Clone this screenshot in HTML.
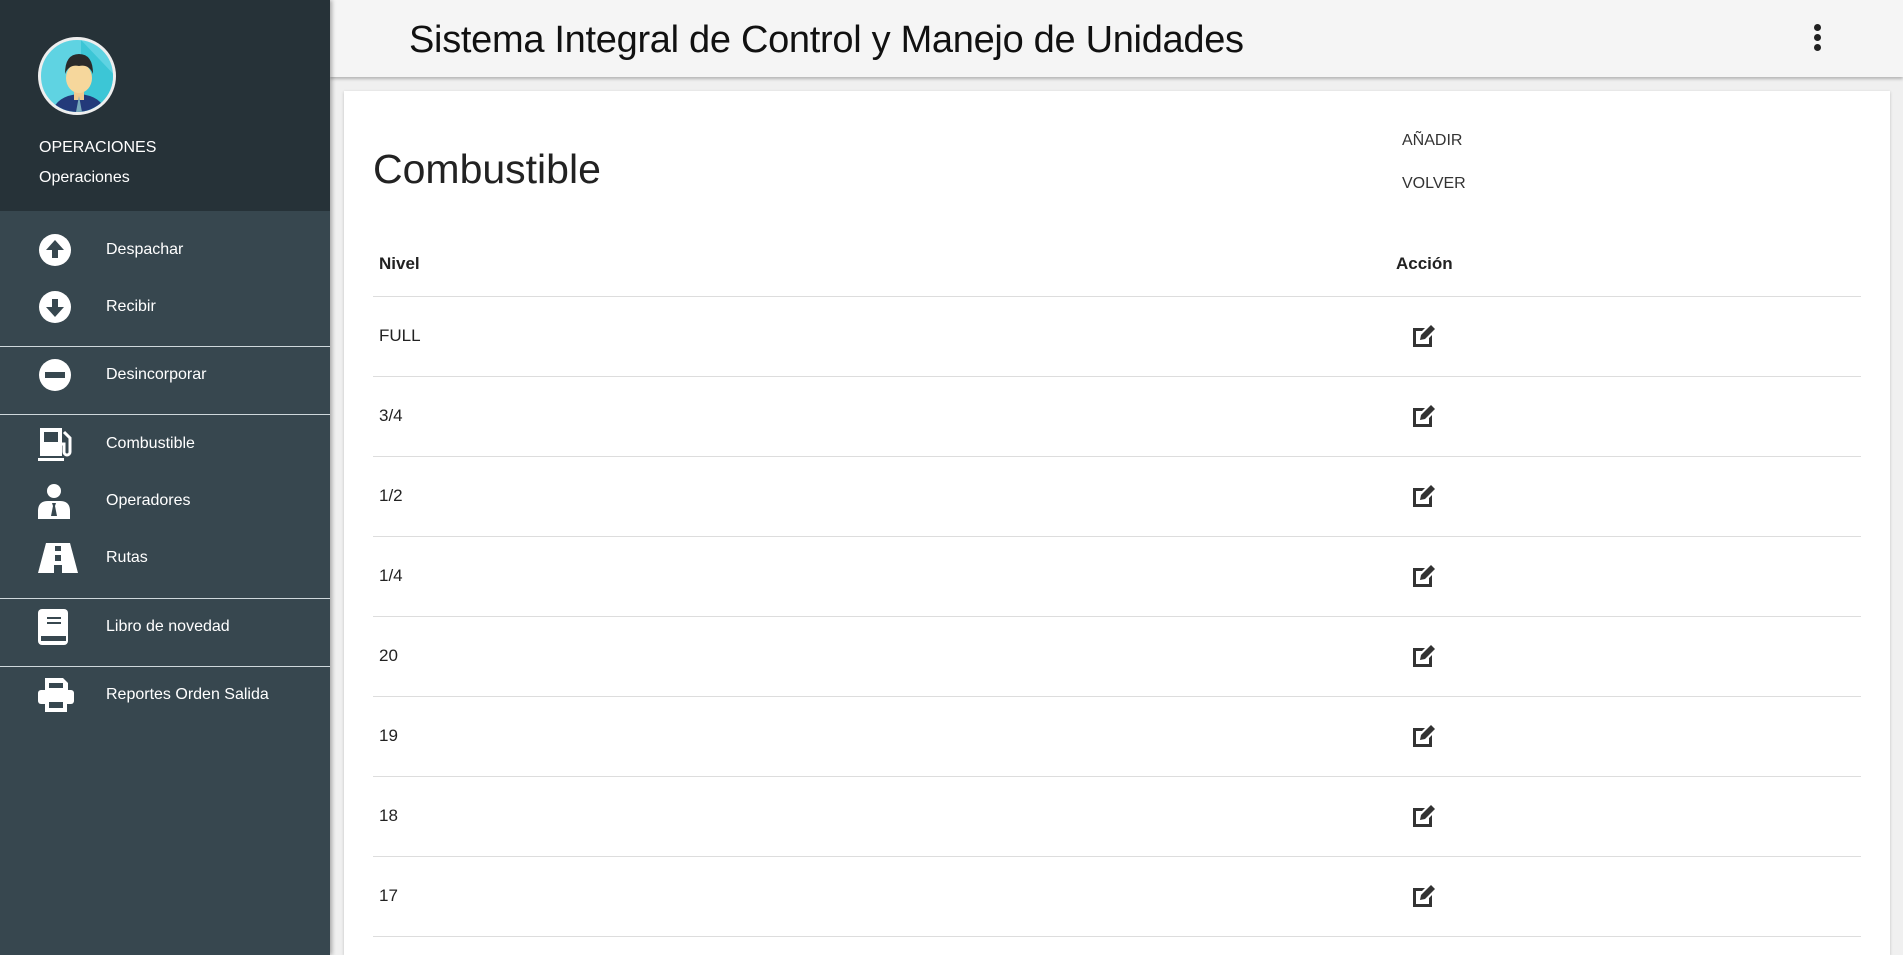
<!DOCTYPE html>
<html><head><meta charset="utf-8"><style>
*{margin:0;padding:0;box-sizing:border-box}
html{width:1903px;height:955px;overflow:hidden}
body{width:1903px;height:955px;overflow:hidden;background:#f0f0f0;font-family:"Liberation Sans",sans-serif;position:relative}
.side{position:absolute;left:0;top:0;width:330px;height:955px;background:#37474f;box-shadow:2px 0 4px rgba(0,0,0,.3);z-index:2}
.sidetop{height:211px;background:#263238;position:relative}
.av{position:absolute;left:38px;top:37px;width:78px;height:78px;border-radius:50%;background:#5fd3e2;border:3px solid #eee;overflow:hidden}
.st{position:absolute;left:39px;color:#fff;font-size:16px}
.mi{position:absolute;left:106px;color:#fff;font-size:16px;transform:translateY(-50%)}
.ic{position:absolute;left:38px;transform:translateY(-50%)}
.hr{position:absolute;left:0;width:330px;height:1px;background:#cfd8dc}
.top{position:absolute;left:330px;top:0;right:0;height:77px;background:#f5f5f5;box-shadow:0 2px 3px rgba(0,0,0,.25)}
.title{position:absolute;left:79px;top:19px;font-size:38px;color:#111;letter-spacing:-0.3px}
.kb{position:absolute;left:1484px;top:24px}
.kb i{display:block;width:7px;height:7px;border-radius:50%;background:#222;margin-bottom:3px}
.card{position:absolute;left:344px;top:91px;width:1546px;height:864px;background:#fff;box-shadow:0 1px 3px rgba(0,0,0,.2);overflow:hidden}
.h1{position:absolute;left:29px;top:55px;font-size:41px;color:#222}
.btn{position:absolute;left:1058px;font-size:16px;color:#333}
.th{position:absolute;top:163px;font-size:17px;font-weight:bold;color:#222}
.row{position:absolute;left:29px;width:1488px;height:80px;border-top:1px solid #ddd}
.row span{position:absolute;left:6px;top:29px;font-size:17px;color:#222}
.row svg{position:absolute;left:1038px;top:26px}
</style></head><body>
<div class="side">
<div class="sidetop">
<div class="av"><svg width="78" height="78" viewBox="0 0 78 78"><path d="M40 0L78 40V78H40Z" fill="#3cc6d6"/><path d="M10 78Q12 56 38 54Q64 56 66 78Z" fill="#233a7a"/><path d="M33 52h10v8h-10z" fill="#f2c98e"/><path d="M38 56l-3 16h6z" fill="#7ab"/><ellipse cx="38" cy="38" rx="13" ry="15" fill="#f6d79c"/><path d="M24 34Q24 14 38 14Q52 14 52 34Q48 24 38 26Q28 24 24 34Z" fill="#2a2a2a"/></svg></div>
<div class="st" style="top:139px">OPERACIONES</div>
<div class="st" style="top:169px">Operaciones</div>
</div>
<svg class="ic" style="top:250px" width="34" height="34" viewBox="0 0 34 34"><circle cx="17" cy="17" r="16" fill="#fff"/><path d="M17 7L8 17h6v8h6v-8h6z" fill="#37474f"/></svg>
<div class="mi" style="top:250px">Despachar</div>
<svg class="ic" style="top:307px" width="34" height="34" viewBox="0 0 34 34"><circle cx="17" cy="17" r="16" fill="#fff"/><path d="M17 27L8 17h6V9h6v8h6z" fill="#37474f"/></svg>
<div class="mi" style="top:307px">Recibir</div>
<div class="hr" style="top:346px"></div>
<svg class="ic" style="top:375px" width="34" height="34" viewBox="0 0 34 34"><circle cx="17" cy="17" r="16" fill="#fff"/><rect x="7" y="14" width="20" height="6" fill="#37474f"/></svg>
<div class="mi" style="top:375px">Desincorporar</div>
<div class="hr" style="top:414px"></div>
<svg class="ic" style="top:444px" width="36" height="36" viewBox="0 0 36 36"><path d="M2 2h22v28H2zM6 6v10h14V6z" fill="#fff"/><rect x="0" y="32" width="26" height="3" fill="#fff"/><path d="M26 6l6 6v14a3 3 0 0 1-6 0v-8h-2" stroke="#fff" stroke-width="3" fill="none"/></svg>
<div class="mi" style="top:444px">Combustible</div>
<svg class="ic" style="top:501px" width="32" height="36" viewBox="0 0 32 36"><circle cx="16" cy="8" r="7" fill="#fff"/><path d="M0 36v-8q0-10 10-10h12q10 0 10 10v8z" fill="#fff"/><path d="M14 20h4l-1 3 2 10h-6l2-10z" fill="#37474f"/></svg>
<div class="mi" style="top:501px">Operadores</div>
<svg class="ic" style="top:558px" width="40" height="30" viewBox="0 0 40 30"><path d="M8 0h24l8 30H0z" fill="#fff"/><rect x="17" y="3" width="6" height="5" fill="#37474f"/><rect x="17" y="12" width="6" height="6" fill="#37474f"/><rect x="16" y="22" width="8" height="8" fill="#37474f"/></svg>
<div class="mi" style="top:558px">Rutas</div>
<div class="hr" style="top:598px"></div>
<svg class="ic" style="top:627px" width="32" height="36" viewBox="0 0 32 36"><rect x="0" y="0" width="30" height="36" rx="4" fill="#fff"/><rect x="9" y="8" width="14" height="2" fill="#37474f"/><rect x="9" y="13" width="14" height="2" fill="#37474f"/><rect x="3" y="27" width="25" height="5" fill="#37474f"/></svg>
<div class="mi" style="top:627px">Libro de novedad</div>
<div class="hr" style="top:666px"></div>
<svg class="ic" style="top:695px" width="36" height="36" viewBox="0 0 36 36"><path d="M7 1h18l5 5v8H7z" fill="#fff"/><rect x="0" y="13" width="36" height="14" rx="3" fill="#fff"/><path d="M7 22h22v13H7z" fill="#fff"/><rect x="11" y="6" width="14" height="5" fill="#37474f"/><rect x="11" y="25" width="14" height="6" fill="#37474f"/></svg>
<div class="mi" style="top:695px">Reportes Orden Salida</div>
</div>
<div class="top"><div class="title">Sistema Integral de Control y Manejo de Unidades</div><div class="kb"><i></i><i></i><i></i></div></div>
<div class="card">
<div class="h1">Combustible</div>
<div class="btn" style="top:41px">AÑADIR</div>
<div class="btn" style="top:84px">VOLVER</div>
<div class="th" style="left:35px">Nivel</div>
<div class="th" style="left:1052px">Acción</div>
<div class="row" style="top:205px"><span>FULL</span><svg width="26" height="26" viewBox="0 0 26 26"><path d="M2 5h12l-3 3H5v13h13v-6l3-3v12H2z" fill="#333"/><path d="M9 17l1-5L20 2l4 4-10 10z" fill="#333"/></svg></div>
<div class="row" style="top:285px"><span>3/4</span><svg width="26" height="26" viewBox="0 0 26 26"><path d="M2 5h12l-3 3H5v13h13v-6l3-3v12H2z" fill="#333"/><path d="M9 17l1-5L20 2l4 4-10 10z" fill="#333"/></svg></div>
<div class="row" style="top:365px"><span>1/2</span><svg width="26" height="26" viewBox="0 0 26 26"><path d="M2 5h12l-3 3H5v13h13v-6l3-3v12H2z" fill="#333"/><path d="M9 17l1-5L20 2l4 4-10 10z" fill="#333"/></svg></div>
<div class="row" style="top:445px"><span>1/4</span><svg width="26" height="26" viewBox="0 0 26 26"><path d="M2 5h12l-3 3H5v13h13v-6l3-3v12H2z" fill="#333"/><path d="M9 17l1-5L20 2l4 4-10 10z" fill="#333"/></svg></div>
<div class="row" style="top:525px"><span>20</span><svg width="26" height="26" viewBox="0 0 26 26"><path d="M2 5h12l-3 3H5v13h13v-6l3-3v12H2z" fill="#333"/><path d="M9 17l1-5L20 2l4 4-10 10z" fill="#333"/></svg></div>
<div class="row" style="top:605px"><span>19</span><svg width="26" height="26" viewBox="0 0 26 26"><path d="M2 5h12l-3 3H5v13h13v-6l3-3v12H2z" fill="#333"/><path d="M9 17l1-5L20 2l4 4-10 10z" fill="#333"/></svg></div>
<div class="row" style="top:685px"><span>18</span><svg width="26" height="26" viewBox="0 0 26 26"><path d="M2 5h12l-3 3H5v13h13v-6l3-3v12H2z" fill="#333"/><path d="M9 17l1-5L20 2l4 4-10 10z" fill="#333"/></svg></div>
<div class="row" style="top:765px"><span>17</span><svg width="26" height="26" viewBox="0 0 26 26"><path d="M2 5h12l-3 3H5v13h13v-6l3-3v12H2z" fill="#333"/><path d="M9 17l1-5L20 2l4 4-10 10z" fill="#333"/></svg></div>
<div style="position:absolute;left:29px;top:845px;width:1488px;height:1px;background:#ddd"></div>
</div>
</body></html>
